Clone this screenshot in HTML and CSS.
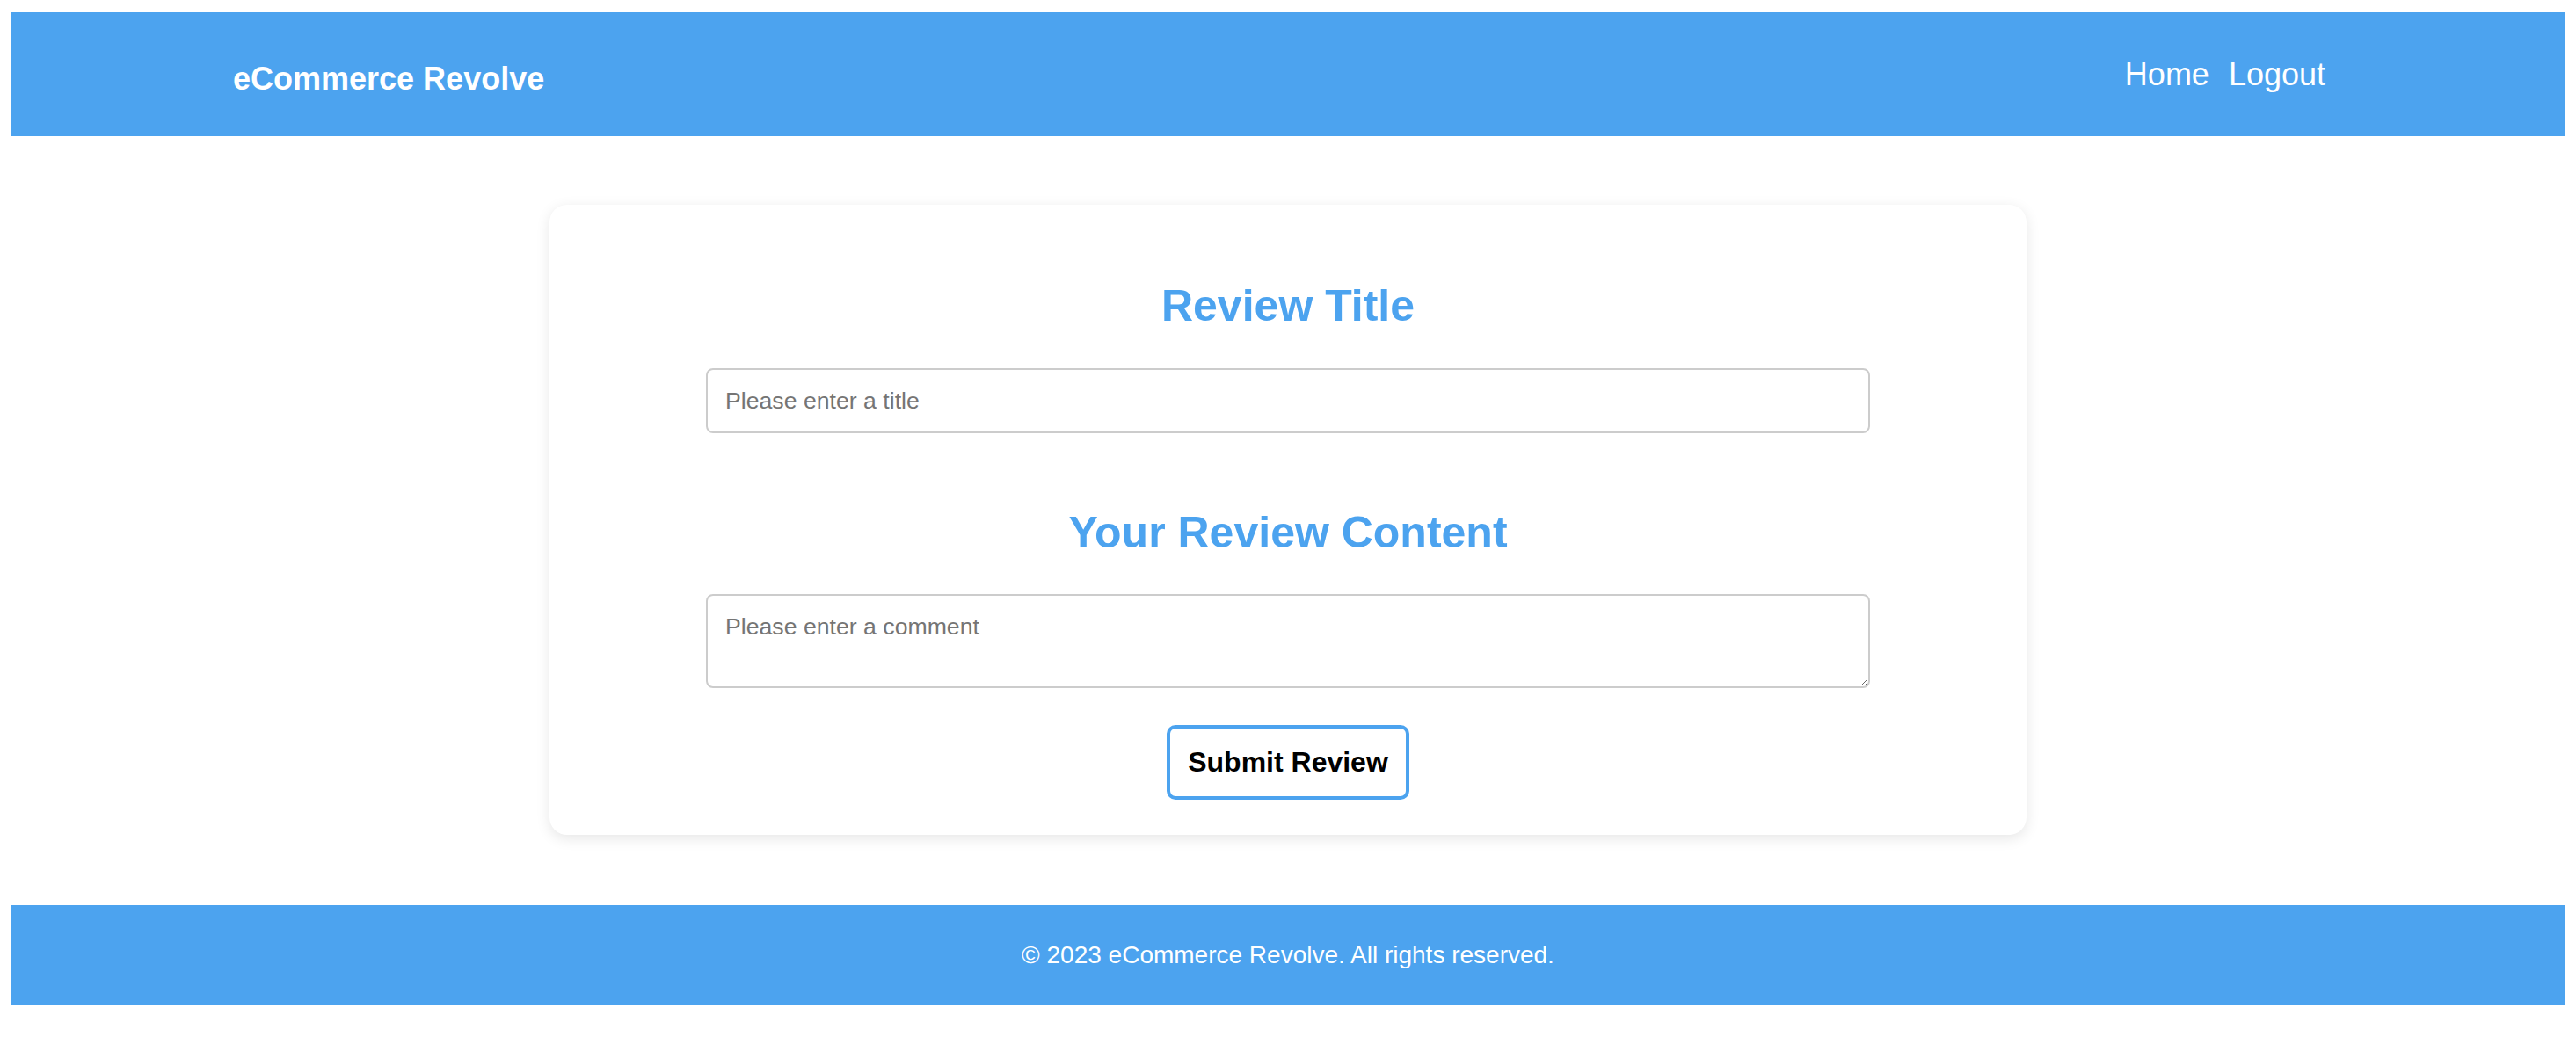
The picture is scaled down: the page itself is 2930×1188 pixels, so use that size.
FILE: index.html
```html
<!DOCTYPE html>
<html lang="en">
<head>
<meta charset="utf-8">
<title>eCommerce Revolve - Review</title>
<link rel="stylesheet" href="styles.css">
</head>
<body>
<header class="site-header">
  <div class="header-inner">
    <div class="logo">eCommerce Revolve</div>
    <nav class="nav">
      <a href="#" class="nav-link">Home</a>
      <a href="#" class="nav-link">Logout</a>
    </nav>
  </div>
</header>
<main class="main">
  <form class="card">
    <h2 class="section-title first">Review Title</h2>
    <input class="field" type="text" placeholder="Please enter a title">
    <h2 class="section-title second">Your Review Content</h2>
    <textarea class="field area" placeholder="Please enter a comment"></textarea>
    <button type="button" class="submit">Submit Review</button>
  </form>
</main>
<footer class="site-footer">
  <p class="footer-text">© 2023 eCommerce Revolve. All rights reserved.</p>
</footer>
</body>
</html>
```
FILE: styles.css
```css
* { box-sizing: border-box; }
body {
  margin: 14px 12px;
  font-family: "Liberation Sans", Arial, Helvetica, sans-serif;
  background: #ffffff;
  color: #000;
}
.site-header {
  background: #4ca3ef;
  height: 141px;
  display: flex;
  align-items: center;
}
.header-inner {
  width: 2400px;
  margin: 0 auto;
  display: flex;
  justify-content: space-between;
  align-items: center;
}
.logo {
  color: #fff;
  font-weight: bold;
  font-size: 36px;
  padding-top: 11px;
}
.nav {
  display: flex;
  gap: 22px;
  padding-right: 20px;
}
.nav-link {
  color: #fff;
  text-decoration: none;
  font-size: 36px;
}
.main {
  padding: 78px 0 80px;
  display: flex;
  justify-content: center;
}
.card {
  width: 1680px;
  background: #fff;
  border-radius: 20px;
  box-shadow: 0 4px 16px rgba(0,0,0,0.1);
  padding: 40px;
  display: flex;
  flex-direction: column;
  align-items: center;
}
.section-title {
  color: #4ca3ef;
  font-size: 50px;
  line-height: 57px;
  font-weight: bold;
  margin: 0;
}
.section-title.first { margin: 47px 0 42px; }
.section-title.second { margin: 85px 0 41px; }
.field {
  width: 1324px;
  height: 74px;
  padding: 20px;
  border: 2px solid #cccccc;
  border-radius: 8px;
  font-family: "Liberation Sans", Arial, Helvetica, sans-serif;
  font-size: 26.67px;
  color: #000;
  background: #fff;
}
.field::placeholder { color: #757575; }
.area {
  height: 107px;
  resize: vertical;
  display: block;
}
.submit {
  margin-top: 42px;
  background: #fff;
  border: 4px solid #4ca3ef;
  border-radius: 10px;
  padding: 20px;
  font-family: "Liberation Sans", Arial, Helvetica, sans-serif;
  font-weight: bold;
  font-size: 32px;
  color: #000;
}
.site-footer {
  background: #4ca3ef;
  height: 114px;
  display: flex;
  align-items: center;
  justify-content: center;
}
.footer-text {
  margin: 0;
  color: #fff;
  font-size: 28px;
}
```
